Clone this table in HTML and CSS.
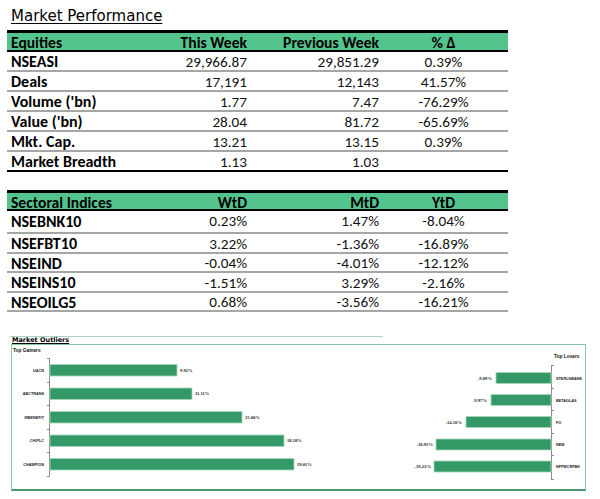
FILE: index.html
```html
<!DOCTYPE html>
<html>
<head>
<meta charset="utf-8">
<link rel="stylesheet" href="styles.css">
</head>
<body>
<div class="page">
  <h1 class="title">Market Performance</h1>

  <div class="tbl t1">
    <div class="row head"><span class="c1">Equities</span><span class="c2">This Week</span><span class="c3">Previous Week</span><span class="c4">% Δ</span></div>
    <div class="row"><span class="c1">NSEASI</span><span class="c2">29,966.87</span><span class="c3">29,851.29</span><span class="c4">0.39%</span></div>
    <div class="row"><span class="c1">Deals</span><span class="c2">17,191</span><span class="c3">12,143</span><span class="c4">41.57%</span></div>
    <div class="row"><span class="c1">Volume ('bn)</span><span class="c2">1.77</span><span class="c3">7.47</span><span class="c4">-76.29%</span></div>
    <div class="row"><span class="c1">Value ('bn)</span><span class="c2">28.04</span><span class="c3">81.72</span><span class="c4">-65.69%</span></div>
    <div class="row"><span class="c1">Mkt. Cap.</span><span class="c2">13.21</span><span class="c3">13.15</span><span class="c4">0.39%</span></div>
    <div class="row last"><span class="c1">Market Breadth</span><span class="c2">1.13</span><span class="c3">1.03</span><span class="c4"></span></div>
  </div>

  <div class="tbl t2">
    <div class="row head"><span class="c1">Sectoral Indices</span><span class="c2">WtD</span><span class="c3">MtD</span><span class="c4">YtD</span></div>
    <div class="row first"><span class="c1">NSEBNK10</span><span class="c2">0.23%</span><span class="c3">1.47%</span><span class="c4">-8.04%</span></div>
    <div class="row"><span class="c1">NSEFBT10</span><span class="c2">3.22%</span><span class="c3">-1.36%</span><span class="c4">-16.89%</span></div>
    <div class="row"><span class="c1">NSEIND</span><span class="c2">-0.04%</span><span class="c3">-4.01%</span><span class="c4">-12.12%</span></div>
    <div class="row"><span class="c1">NSEINS10</span><span class="c2">-1.51%</span><span class="c3">3.29%</span><span class="c4">-2.16%</span></div>
    <div class="row"><span class="c1">NSEOILG5</span><span class="c2">0.68%</span><span class="c3">-3.56%</span><span class="c4">-16.21%</span></div>
  </div>

  <div class="outliers-head"><span>Market Outliers</span></div>
  <div class="chart-frame">
    <svg class="charts" width="573" height="144" viewBox="12 343 573 144" xmlns="http://www.w3.org/2000/svg">
      <g class="ttl">
        <text x="13" y="350">Top Gainers</text>
        <text x="554" y="356">Top Losers</text>
      </g>
      <g class="axis">
        <line x1="49.5" y1="356" x2="49.5" y2="475"/>
        <line x1="47" y1="356.5" x2="49.5" y2="356.5"/>
        <line x1="47" y1="380.5" x2="49.5" y2="380.5"/>
        <line x1="47" y1="403.5" x2="49.5" y2="403.5"/>
        <line x1="47" y1="427.5" x2="49.5" y2="427.5"/>
        <line x1="47" y1="450.5" x2="49.5" y2="450.5"/>
        <line x1="47" y1="474.5" x2="49.5" y2="474.5"/>
      </g>
      <g class="bars">
        <rect x="50" y="362.5" width="127" height="11.5"/>
        <rect x="50" y="386" width="142" height="11.5"/>
        <rect x="50" y="409.5" width="192" height="11.5"/>
        <rect x="50" y="433" width="234" height="11.5"/>
        <rect x="50" y="456.5" width="244" height="11.5"/>
      </g>
      <g class="cat end">
        <text x="44" y="369.5">UACN</text>
        <text x="44" y="393">ABCTRANS</text>
        <text x="44" y="416.5">MBENEFIT</text>
        <text x="44" y="440">CHIPLC</text>
        <text x="44" y="463.5">CHAMPION</text>
      </g>
      <g class="val">
        <text x="180" y="369.5">9.92%</text>
        <text x="195" y="393">11.11%</text>
        <text x="245" y="416.5">15.00%</text>
        <text x="287" y="440">18.18%</text>
        <text x="297" y="463.5">19.01%</text>
      </g>

      <g class="axis">
        <line x1="551.5" y1="363" x2="551.5" y2="478"/>
        <line x1="551.5" y1="363.5" x2="554" y2="363.5"/>
        <line x1="551.5" y1="386.5" x2="554" y2="386.5"/>
        <line x1="551.5" y1="408.5" x2="554" y2="408.5"/>
        <line x1="551.5" y1="431.5" x2="554" y2="431.5"/>
        <line x1="551.5" y1="453.5" x2="554" y2="453.5"/>
        <line x1="551.5" y1="477.5" x2="554" y2="477.5"/>
      </g>
      <g class="bars">
        <rect x="496" y="370.5" width="55" height="11"/>
        <rect x="491" y="392.5" width="60" height="11"/>
        <rect x="466" y="414.5" width="85" height="11"/>
        <rect x="436" y="437" width="115" height="11"/>
        <rect x="434" y="459" width="117" height="11"/>
      </g>
      <g class="val end">
        <text x="492" y="377.5">-9.09%</text>
        <text x="487" y="399.5">-9.97%</text>
        <text x="462" y="421.5">-14.10%</text>
        <text x="433" y="444">-18.93%</text>
        <text x="431" y="466">-19.23%</text>
      </g>
      <g class="cat">
        <text x="556" y="377.5">STERLNBANK</text>
        <text x="556" y="399.5">BETAGLAS</text>
        <text x="556" y="421.5">FO</text>
        <text x="556" y="444">NEM</text>
        <text x="556" y="466">NPFMCRFBK</text>
      </g>
    </svg>
  </div>
</div>
</body>
</html>
```

FILE: styles.css
```css
body {
  margin: 0;
  background: #fff;
  color: #000;
  font-family: Carlito, Lato, "Liberation Sans", sans-serif;
}

.page {
  padding: 6px 0 0 7px;
}

.title {
  margin: 0;
  padding-left: 4px;
  height: 24px;
  line-height: 20px;
  font-family: "DejaVu Sans", sans-serif;
  font-size: 15px;
  font-weight: normal;
  text-decoration: underline;
  text-decoration-thickness: 1px;
  text-underline-offset: 2px;
}

.tbl {
  width: 501px;
}

.t2 {
  margin-top: 18px;
}

.row {
  display: grid;
  grid-template-columns: 143px 97px 132px 129px;
  align-items: center;
  height: 18px;
  border-bottom: 2px solid #a6a6a6;
  font-size: 15.2px;
  color: #111;
}

.row .c1 {
  padding-left: 4px;
  font-weight: bold;
  font-size: 16px;
  color: #000;
}

.c2, .c3 {
  text-align: right;
}

.c4 {
  text-align: center;
}

.row.head {
  background: #54c48f;
  font-weight: bold;
  font-size: 15.6px;
  color: #000;
  height: 17px;
  border-top: 3px solid #000;
  border-bottom: 2px solid #000;
}

.row.head .c1 {
  font-size: 15.6px;
}

.t2 .row {
  height: 17.5px;
}

.t2 .row.head {
  height: 15.5px;
}

.t2 .row.first {
  height: 21.5px;
}

.row.last {
  border-bottom-color: #000;
}

.outliers-head {
  margin-top: 24px;
  margin-left: 3px;
  width: 371px;
  height: 7px;
  border-top: 1px solid #a9d3c0;
  font-family: "DejaVu Sans", sans-serif;
  font-size: 6.5px;
  font-weight: bold;
  line-height: 7px;
  padding-left: 2px;
}

.outliers-head span {
  text-decoration: underline;
}

.chart-frame {
  margin-left: 4px;
  width: 573px;
  height: 144px;
  border: 1px solid #8cc5a8;
  border-bottom: 2px solid #4c9a70;
}

.charts {
  display: block;
}

.charts .ttl text {
  font-family: "Liberation Sans", sans-serif;
  font-weight: bold;
  font-size: 4.8px;
  fill: #111;
}

.charts .axis line {
  stroke: #8c8c8c;
  stroke-width: 1;
}

.charts .bars rect {
  fill: #339966;
  stroke: #a8d8bf;
  stroke-width: 0.8;
}

.charts .cat text {
  font-family: "Liberation Sans", sans-serif;
  font-weight: bold;
  font-size: 3.8px;
  fill: #222;
}

.charts .val text {
  font-family: "Liberation Serif", serif;
  font-weight: bold;
  font-size: 4.6px;
  fill: #222;
}

.charts .end text {
  text-anchor: end;
}
```
